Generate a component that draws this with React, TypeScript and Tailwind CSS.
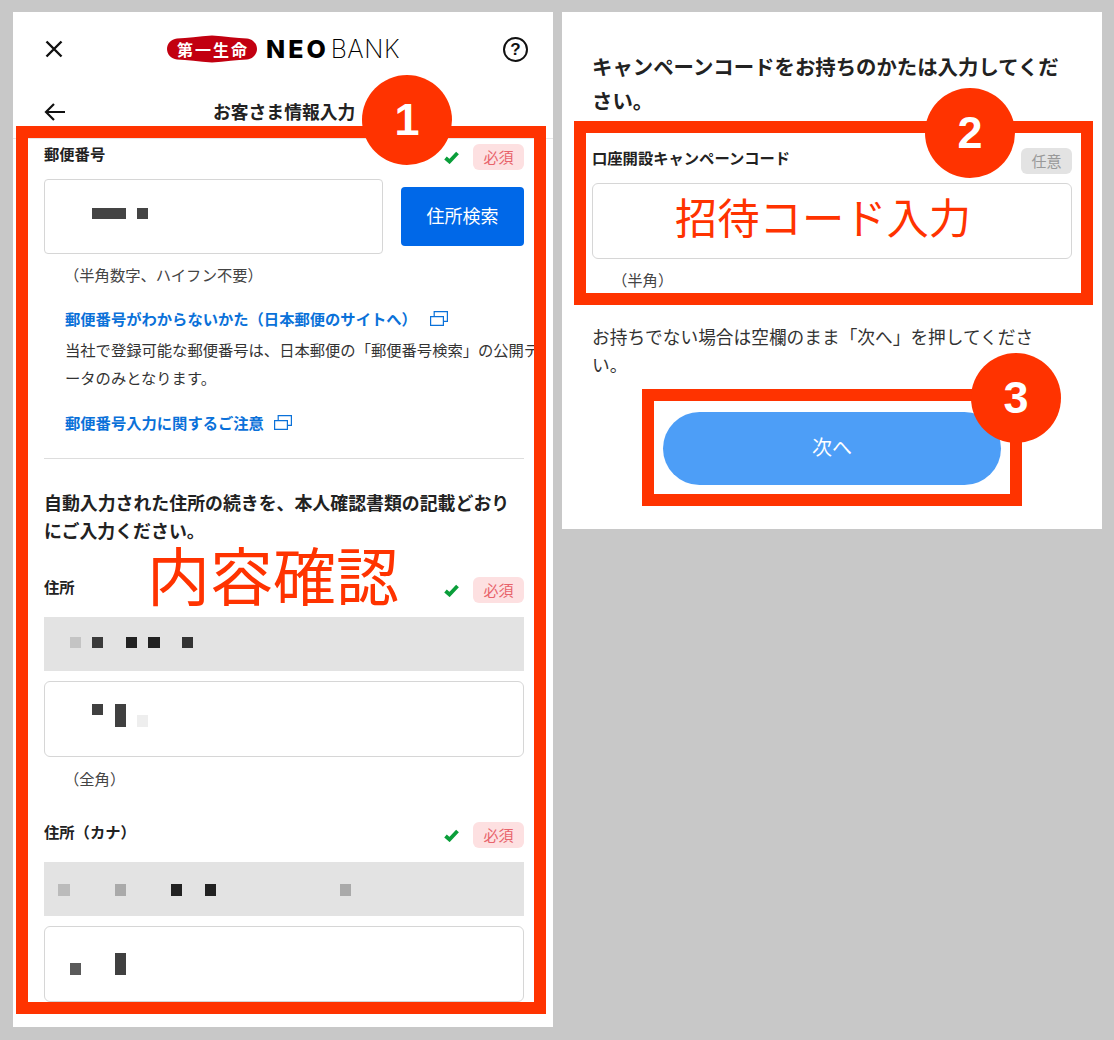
import React from "react";

const Badge = ({ text = "必須", gray = false }: { text?: string; gray?: boolean }) => (
  <span
    className={
      gray
        ? "flex h-[26px] w-[51px] items-center justify-center rounded-[6px] bg-[#e3e3e3] text-[15px] text-[#999999]"
        : "flex h-[26px] w-[51px] items-center justify-center rounded-[6px] bg-[#fde0e1] text-[15px] text-[#e8636b]"
    }
  >
    {text}
  </span>
);

const Check = () => (
  <svg width="15" height="13" viewBox="0 0 15 13" className="mr-[14px]">
    <path d="M1.5 7 L5.5 10.5 L13.5 2" fill="none" stroke="#0a9e3a" strokeWidth="3.8" />
  </svg>
);

const LabelRow = ({ label }: { label: string }) => (
  <div className="flex h-[26px] items-center justify-between">
    <span className="-translate-y-[4px] text-[15.3px] font-bold leading-[26px] text-[#222222]">{label}</span>
    <div className="flex items-center">
      <Check />
      <Badge />
    </div>
  </div>
);

const ExtIcon = ({ className }: { className: string }) => (
  <svg width="18" height="15" viewBox="0 0 18 15" fill="none" stroke="#0a71d9" strokeWidth="1.2" className={"shrink-0 " + className}>
    <path d="M0.6 5.6 H13.4 V14.4 H0.6 Z" />
    <path d="M4.2 5.4 V0.6 H17.4 V10.4 H13.6" />
  </svg>
);

const Hint = ({ text }: { text: string }) => (
  <p className="pl-[20px] text-[15.3px] leading-[24px] text-[#444444]">{text}</p>
);

const Circle = ({ n, className }: { n: string; className: string }) => (
  <div
    className={
      "absolute flex h-[90px] w-[90px] items-center justify-center rounded-full bg-[#ff3300] font-['Liberation_Sans',sans-serif] text-[45px] font-bold text-white " +
      className
    }
  >
    {n}
  </div>
);

export default function App() {
  return (
    <div className="flex h-[1040px] w-[1114px] items-start gap-[9px] overflow-hidden bg-[#c8c8c8] pl-[13px] pt-[12px] font-['Noto_Sans_CJK_JP','Noto_Sans',sans-serif] [text-spacing-trim:space-all]">
      {/* Left panel */}
      <div className="relative h-[1015px] w-[540px] shrink-0 overflow-hidden bg-white">
        <header className="border-b border-[#e8e8e8]">
          <div className="flex h-[74px] items-center justify-between pl-[31px] pr-[25px]">
            <svg width="20" height="20" viewBox="0 0 20 20" fill="none" stroke="#111111" strokeWidth="2.4">
              <path d="M2.5 2.5 L17.5 17.5 M17.5 2.5 L2.5 17.5" />
            </svg>
            <div className="flex items-center">
              <div className="relative flex h-[28px] w-[90px] items-center justify-center">
                <svg width="90" height="28" viewBox="0 0 90 28" className="absolute inset-0">
                  <path
                    d="M10 3.5 C20 3 32 1.5 45 0.5 C58 1.5 70 3 80 3.5 C86 4 90 9 90 14 C90 19 86 24 80 24.5 C70 25 58 26.5 45 27.5 C32 26.5 20 25 10 24.5 C4 24 0 19 0 14 C0 9 4 4 10 3.5 Z"
                    fill="#c20010"
                  />
                </svg>
                <span className="relative pl-[2px] text-[16px] font-bold leading-none tracking-[2px] text-white">第一生命</span>
              </div>
              <div className="ml-[9px] flex items-center font-['Inter',sans-serif] text-[25px] leading-none text-black">
                <span className="font-extrabold tracking-[3px]">NEO</span>
                <span className="ml-[2px] font-extralight tracking-[0.5px]">BANK</span>
              </div>
            </div>
            <div className="flex h-[25px] w-[25px] items-center justify-center rounded-full border-[2.5px] border-[#111111] font-['Liberation_Sans',sans-serif] text-[17px] font-bold leading-none text-[#111111]">
              ?
            </div>
          </div>
          <div className="flex h-[52px] items-center pl-[31px]">
            <svg width="22" height="20" viewBox="0 0 22 20" fill="none" stroke="#111111" strokeWidth="2.2">
              <path d="M21 10 H2 M10 2 L2 10 L10 18" />
            </svg>
            <h1 className="ml-[147px] text-[17.8px] font-bold leading-none text-[#222222]">お客さま情報入力</h1>
          </div>
        </header>

        <div className="pl-[31px] pr-[29px] pt-[5px]">
          <LabelRow label="郵便番号" />
          <div className="mt-[9px] flex items-center justify-between">
            <div className="flex h-[75px] w-[339px] items-start rounded-[4px] border border-[#d6d6d6] pl-[47px] pt-[28px]">
              <span className="h-[11px] w-[34px] bg-[#444444]" />
              <span className="ml-[11px] h-[11px] w-[11px] bg-[#444444]" />
            </div>
            <button className="h-[59px] w-[123px] rounded-[4px] bg-[#0068e8] pb-[3px] text-[18px] text-white">住所検索</button>
          </div>
          <div className="mt-[8px]">
            <Hint text="（半角数字、ハイフン不要）" />
          </div>
          <div className="mt-[20px] pl-[21px]">
            <a className="flex h-[24px] items-center text-[15.3px] font-bold text-[#0a71d9]">
              郵便番号がわからないかた（日本郵便のサイトへ）
              <ExtIcon className="ml-[13px]" />
            </a>
            <p className="mt-[5px] w-[480px] text-[15.3px] leading-[28px] text-[#333333]">
              当社で登録可能な郵便番号は、日本郵便の「郵便番号検索」の公開データのみとなります。
            </p>
            <a className="mt-[19px] flex h-[24px] items-center text-[15.3px] font-bold text-[#0a71d9]">
              郵便番号入力に関するご注意
              <ExtIcon className="ml-[10px]" />
            </a>
          </div>
          <div className="mt-[24px] h-px bg-[#dddddd]" />
          <h2 className="mt-[29px] text-[17.9px] font-bold leading-[28px] text-[#222222]">
            自動入力された住所の続きを、本人確認書類の記載どおりにご入力ください。
          </h2>
          <div className="mt-[33px]">
            <LabelRow label="住所" />
          </div>
          <div className="mt-[14px] flex h-[54px] items-start bg-[#e3e3e3] pl-[26px] pt-[20px]">
            <span className="h-[11px] w-[11px] bg-[#c4c4c4]" />
            <span className="ml-[11px] h-[11px] w-[11px] bg-[#3a3a3a]" />
            <span className="ml-[23px] h-[11px] w-[11px] bg-[#222222]" />
            <span className="ml-[11px] h-[11px] w-[12px] bg-[#222222]" />
            <span className="ml-[22px] h-[11px] w-[11px] bg-[#333333]" />
          </div>
          <div className="mt-[10px] flex h-[76px] items-start rounded-[6px] border border-[#d6d6d6] pl-[47px] pt-[22px]">
            <span className="h-[11px] w-[11px] bg-[#404040]" />
            <span className="ml-[12px] h-[23px] w-[11px] bg-[#404040]" />
            <span className="ml-[11px] mt-[11px] h-[12px] w-[11px] bg-[#eeeeee]" />
          </div>
          <div className="mt-[9px]">
            <Hint text="（全角）" />
          </div>
          <div className="mt-[32px]">
            <LabelRow label="住所（カナ）" />
          </div>
          <div className="mt-[14px] flex h-[54px] items-start bg-[#e3e3e3] pl-[14px] pt-[22px]">
            <span className="h-[12px] w-[12px] bg-[#bbbbbb]" />
            <span className="ml-[45px] h-[12px] w-[11px] bg-[#aaaaaa]" />
            <span className="ml-[45px] h-[12px] w-[11px] bg-[#222222]" />
            <span className="ml-[23px] h-[12px] w-[11px] bg-[#222222]" />
            <span className="ml-[124px] h-[12px] w-[11px] bg-[#aaaaaa]" />
          </div>
          <div className="mt-[10px] flex h-[76px] items-start rounded-[6px] border border-[#d6d6d6] pl-[25px] pt-[26px]">
            <span className="mt-[10px] h-[12px] w-[11px] bg-[#5a5a5a]" />
            <span className="ml-[34px] h-[22px] w-[11px] bg-[#404040]" />
          </div>
        </div>

        {/* Annotation overlays */}
        <div className="absolute left-[3px] top-[114px] h-[888px] w-[530px] border-[12px] border-[#ff3300]" />
        <Circle n="1" className="left-[349px] top-[63px]" />
        <span className="absolute left-[134px] top-[521px] text-[63px] leading-[80px] text-[#ff3300]">内容確認</span>
      </div>

      {/* Right panel */}
      <div className="relative h-[517px] w-[540px] shrink-0 overflow-hidden bg-white">
        <div className="px-[30px] pt-[37px]">
          <h2 className="w-[480px] text-[20.4px] font-bold leading-[34px] text-[#222222]">
            キャンペーンコードをお持ちのかたは入力してください。
          </h2>
          <div className="mt-[31px] flex items-center justify-between">
            <span className="-translate-y-[4px] text-[15.3px] font-bold leading-[26px] text-[#222222]">口座開設キャンペーンコード</span>
            <Badge text="任意" gray />
          </div>
          <div className="mt-[9px] h-[76px] rounded-[6px] border border-[#d6d6d6]" />
          <div className="mt-[8px]">
            <Hint text="（半角）" />
          </div>
          <p className="mt-[31px] w-[470px] text-[17.7px] leading-[28px] text-[#333333]">
            お持ちでない場合は空欄のまま「次へ」を押してください。
          </p>
          <button className="mx-auto mt-[34px] block h-[73px] w-[338px] rounded-full bg-[#4d9ef7] pb-[3px] text-[20px] text-white">次へ</button>
        </div>

        <div className="absolute left-[12px] top-[109px] h-[184px] w-[519px] border-[12px] border-[#ff3300]" />
        <div className="absolute left-[80px] top-[377px] h-[117px] w-[380px] border-[12px] border-[#ff3300]" />
        <Circle n="2" className="left-[363px] top-[76px]" />
        <Circle n="3" className="left-[409px] top-[341px]" />
        <span className="absolute left-[113px] top-[172px] text-[42.3px] leading-[64px] text-[#ff3300]">招待コード入力</span>
      </div>
    </div>
  );
}
